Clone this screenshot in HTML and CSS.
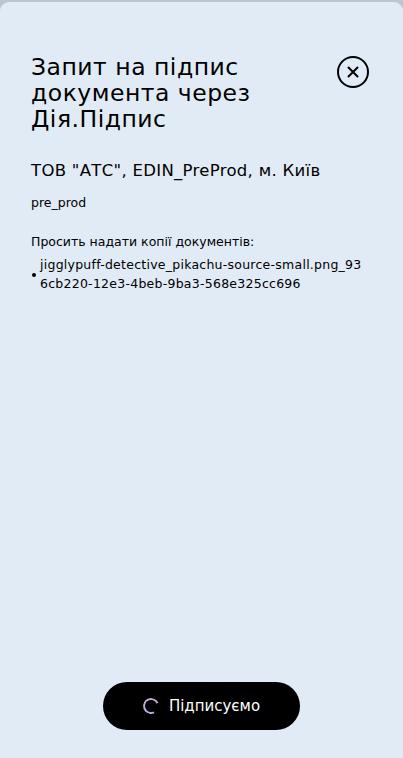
FILE: index.html
```html
<!DOCTYPE html>
<html lang="uk">
<head>
<meta charset="utf-8">
<link rel="stylesheet" href="styles.css">
</head>
<body>
<div class="sheet">
  <div class="content">
    <div class="header">
      <h1 class="title">Запит на підпис документа через Дія.Підпис</h1>
      <button class="close" aria-label="Закрити">
        <svg width="34" height="34" viewBox="0 0 34 34">
          <circle cx="17" cy="17" r="15" fill="none" stroke="#000" stroke-width="2"/>
          <path d="M12.5 12.5 L21.5 21.5 M21.5 12.5 L12.5 21.5" stroke="#000" stroke-width="2" stroke-linecap="round"/>
        </svg>
      </button>
    </div>
    <p class="org">ТОВ "АТС", EDIN_PreProd, м. Київ</p>
    <p class="small">pre_prod</p>
    <p class="small ask">Просить надати копії документів:</p>
    <ul class="docs">
      <li><span class="dot"></span><span class="name">jigglypuff-detective_pikachu-source-small.png_936cb220-12e3-4beb-9ba3-568e325cc696</span></li>
    </ul>
  </div>
  <div class="footer">
    <button class="sign">
      <span class="spinner"></span>
      <span>Підписуємо</span>
    </button>
  </div>
</div>
</body>
</html>
```

FILE: styles.css
```css
* { box-sizing: border-box; }
html, body {
  margin: 0;
  padding: 0;
  height: 100%;
  background: #bfc5cc;
}
body {
  font-family: "DejaVu Sans", "Noto Sans", sans-serif;
  color: #000;
}
.sheet {
  margin-top: 2px;
  height: 756px;
  background: #e1ebf5;
  border-radius: 9px 9px 0 0;
  display: flex;
  flex-direction: column;
  justify-content: space-between;
}
.content {
  padding: 52px 35px 0 31px;
}
.header {
  display: flex;
  justify-content: space-between;
  align-items: flex-start;
}
.title {
  margin: 0;
  font-size: 23.5px;
  line-height: 26px;
  font-weight: 400;
  width: 262px;
  letter-spacing: 0.5px;
}
.close {
  background: none;
  border: none;
  padding: 0;
  margin: 1px -2px 0 0;
  width: 34px;
  height: 34px;
  cursor: pointer;
}
.org {
  margin: 28px 0 0;
  font-size: 16.5px;
  line-height: 22px;
  letter-spacing: 0.3px;
}
.small {
  margin: 12px 0 0;
  font-size: 12.5px;
  line-height: 18px;
}
.ask { margin-top: 21px; }
.docs {
  list-style: none;
  margin: 4px 0 0;
  padding: 0;
}
.docs li {
  display: flex;
  align-items: center;
  gap: 4px;
  font-size: 12.5px;
  line-height: 19px;
}
.dot {
  flex: none;
  width: 4px;
  height: 4px;
  margin-top: 1px;
  margin-left: 1px;
  border-radius: 50%;
  background: #000;
}
.name {
  word-break: break-all;
  letter-spacing: 0.25px;
}
.footer {
  display: flex;
  justify-content: center;
  padding-bottom: 28px;
}
.sign {
  width: 197px;
  height: 48px;
  border: none;
  border-radius: 24px;
  background: #000;
  color: #fff;
  font-family: inherit;
  font-size: 15px;
  display: flex;
  align-items: center;
  justify-content: center;
  gap: 10px;
  padding: 0;
}
.spinner {
  width: 16px;
  height: 16px;
  border-radius: 50%;
  border: 2px solid #b9a9d4;
  border-right-color: transparent;
  transform: rotate(20deg);
}
```
